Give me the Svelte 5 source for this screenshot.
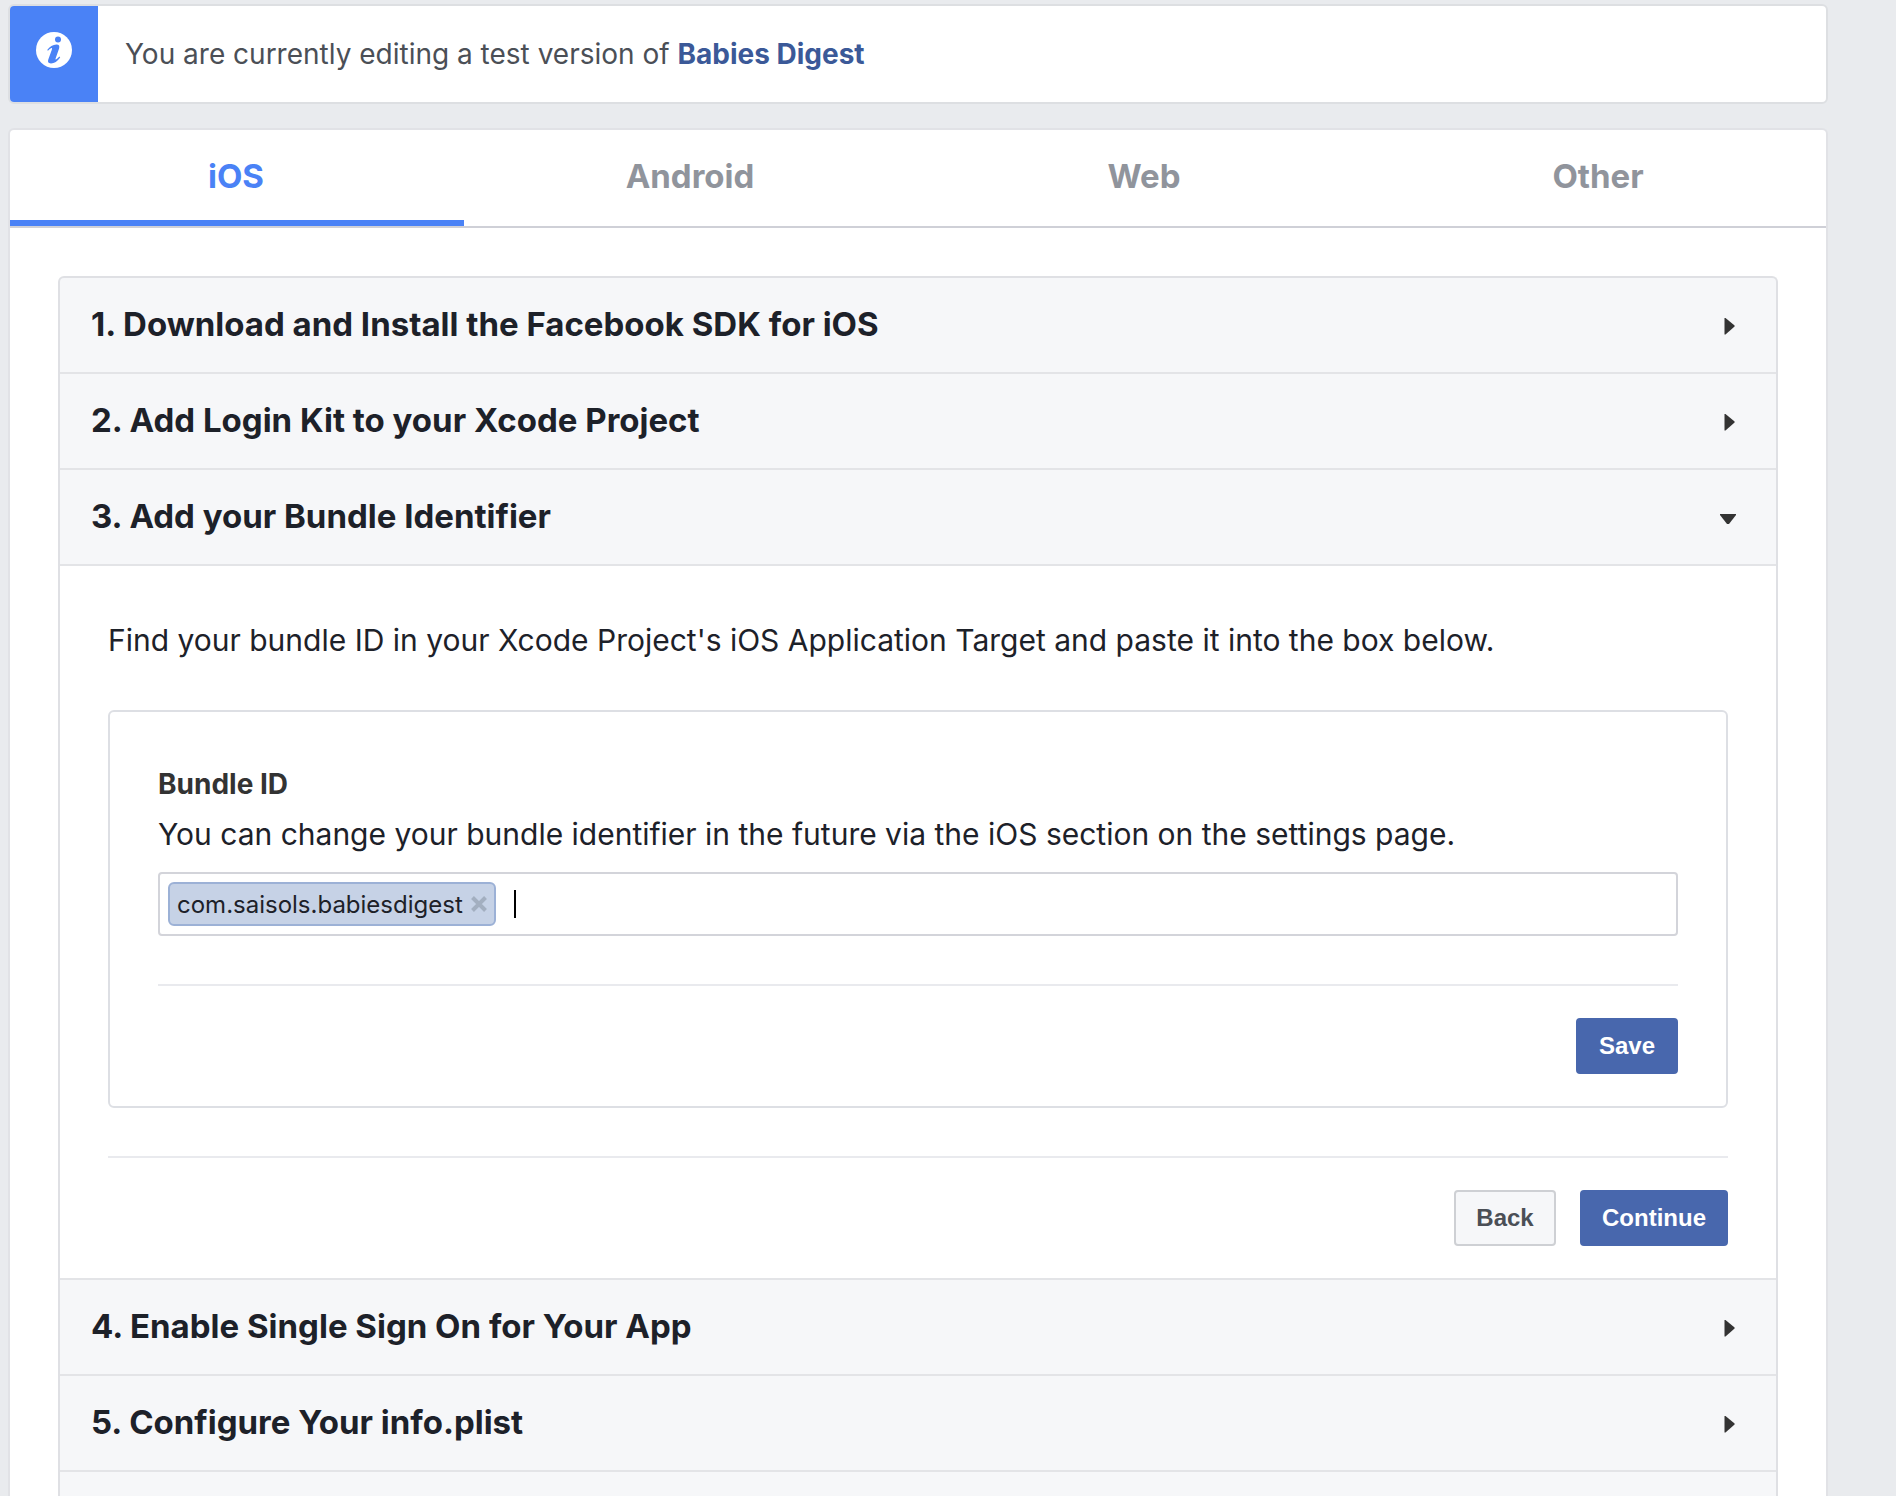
<script lang="ts">
  const tabs = ['iOS', 'Android', 'Web', 'Other'];
  const steps = [
    'Download and Install the Facebook SDK for iOS',
    'Add Login Kit to your Xcode Project',
    'Add your Bundle Identifier',
    'Enable Single Sign On for Your App',
    'Configure Your info.plist'
  ];

  let activeTab = $state('iOS');
  let openStep = $state(2);
  let bundleIds = $state(['com.saisols.babiesdigest']);

  function toggleStep(index: number) {
    openStep = openStep === index ? -1 : index;
  }

  function removeBundle(id: string) {
    bundleIds = bundleIds.filter((b) => b !== id);
  }
</script>

<div class="page">
  <div class="notice">
    <div class="notice-icon">
      <svg width="36" height="36" viewBox="0 0 36 36" aria-hidden="true">
        <circle cx="18" cy="18" r="18" fill="#fff" />
        <circle cx="22" cy="7.6" r="3" fill="#4a82f6" />
        <path
          d="M11.2 18C13.6 14.6 17 12.6 20.4 12.4C23 12.3 23.8 13.8 23.1 16.4L19.6 26.6C19.1 28.2 20.2 28 23.4 24.6L24.2 25.4C21.4 29.2 18.4 31.4 15 31.4C12.2 31.4 11.6 29.8 12.3 27.6L15.9 17.4C16.5 15.4 15 15.4 12 18.8Z"
          fill="#4a82f6"
        />
      </svg>
    </div>
    <p>You are currently editing a test version of <a href="#app">Babies Digest</a></p>
  </div>

  <main class="card">
    <div class="tabs" role="tablist">
      {#each tabs as tab}
        <button
          role="tab"
          aria-selected={activeTab === tab}
          class="tab"
          class:active={activeTab === tab}
          onclick={() => (activeTab = tab)}
        >{tab}</button>
      {/each}
    </div>

    <div class="steps">
      {#each steps as step, i}
        <button class="step" aria-expanded={openStep === i} onclick={() => toggleStep(i)}>
          <span>{i + 1}. {step}</span>
          <svg class="arrow" width="20" height="22" viewBox="0 0 20 22" aria-hidden="true">
            {#if openStep === i}
              <path d="M2 9H18V10L11 19H9L2 10Z" fill="#333" />
            {:else}
              <path d="M6.5 5H7.5L16.6 12.5V13.5L7.5 21.5H6.5Z" fill="#333" />
            {/if}
          </svg>
        </button>

        {#if i === 2 && openStep === 2}
          <div class="panel">
            <p class="text">
              Find your bundle ID in your Xcode Project's iOS Application Target and paste it into the box below.
            </p>

            <div class="box">
              <label for="bundle">Bundle ID</label>
              <p class="text">
                You can change your bundle identifier in the future via the iOS section on the settings page.
              </p>
              <div class="tokens">
                {#each bundleIds as id}
                  <span class="token">
                    {id}
                    <button aria-label="Remove" onclick={() => removeBundle(id)}>
                      <svg width="16" height="16" viewBox="0 0 16 16">
                        <path d="M1.5 1.5L14.5 14.5M14.5 1.5L1.5 14.5" stroke="#a3afc0" stroke-width="4" />
                      </svg>
                    </button>
                  </span>
                {/each}
                <span class="caret"></span>
                <input id="bundle" type="text" />
              </div>
              <div class="actions">
                <button class="btn primary">Save</button>
              </div>
            </div>

            <div class="actions">
              <button class="btn">Back</button>
              <button class="btn primary">Continue</button>
            </div>
          </div>
        {/if}
      {/each}
    </div>
  </main>
</div>

<style>
  :global(body) {
    background: #e9ebee;
  }

  .page {
    box-sizing: border-box;
    min-height: 100vh;
    padding: 4px 68px 0 8px;
    display: flex;
    flex-direction: column;
    gap: 24px;
    font-family: Inter, Roboto, sans-serif;
    color: #1d2129;
  }

  p {
    margin: 0;
  }

  button {
    font-family: inherit;
    cursor: pointer;
  }

  .notice {
    display: flex;
    background: #fff;
    border: 2px solid #dddfe2;
    border-radius: 6px;
    overflow: hidden;
  }

  .notice-icon {
    width: 88px;
    height: 96px;
    box-sizing: border-box;
    padding-top: 26px;
    text-align: center;
    background: #4a82f6;
  }

  .notice p {
    padding: 0 27px;
    font-size: 28px;
    line-height: 96px;
    color: #4b4f56;
  }

  .notice a {
    color: #3b5998;
    font-weight: 700;
    text-decoration: none;
  }

  .card {
    flex: 1;
    display: flex;
    flex-direction: column;
    background: #fff;
    border: 2px solid #e1e2e6;
    border-bottom: none;
    border-radius: 6px 6px 0 0;
  }

  .tabs {
    display: flex;
    border-bottom: 2px solid #cfd0d7;
  }

  .tab {
    flex: 1;
    height: 96px;
    padding: 2px 2px 0 0;
    background: none;
    border: none;
    border-bottom: 6px solid transparent;
    font-size: 33px;
    font-weight: 700;
    color: #90949c;
  }

  .tab.active {
    color: #4a82f6;
    border-bottom-color: #4a82f6;
  }

  .steps {
    flex: 1;
    margin: 48px 48px 0;
    background: #f6f7f9;
    border: 2px solid #dfe0e4;
    border-bottom: none;
    border-radius: 6px 6px 0 0;
  }

  .step {
    display: flex;
    align-items: center;
    justify-content: space-between;
    width: 100%;
    height: 96px;
    padding: 0 38px 2px 31px;
    background: none;
    border: none;
    border-bottom: 2px solid #e3e4e7;
    font-size: 33px;
    font-weight: 700;
    color: #1d2129;
    text-align: left;
  }

  .panel {
    padding: 48px 48px 32px;
    background: #fff;
    border-bottom: 2px solid #e3e4e7;
  }

  .text {
    font-size: 30px;
    line-height: 52px;
  }

  .box {
    margin: 44px 0 48px;
    padding: 48px 48px 32px;
    border: 2px solid #dddfe4;
    border-radius: 6px;
  }

  label {
    display: block;
    font-size: 28px;
    font-weight: 700;
    line-height: 48px;
    color: #333;
  }

  .tokens {
    display: flex;
    align-items: center;
    margin: 12px 0 48px;
    padding: 8px;
    border: 2px solid #d3d4da;
    border-radius: 4px;
  }

  .token {
    display: flex;
    align-items: center;
    gap: 8px;
    height: 40px;
    padding: 0 7px;
    background: #c6d2e6;
    border: 2px solid #9cb1d6;
    border-radius: 6px;
    font-size: 24px;
  }

  .token button {
    display: flex;
    padding: 0;
    background: none;
    border: none;
  }

  .caret {
    width: 2px;
    height: 28px;
    margin-left: 18px;
    background: #000;
  }

  .tokens input {
    flex: 1;
    min-width: 0;
    padding: 0;
    border: none;
    outline: none;
    background: none;
    font-family: inherit;
    font-size: 24px;
  }

  .actions {
    display: flex;
    justify-content: flex-end;
    gap: 24px;
    padding-top: 32px;
    border-top: 2px solid #e9eaee;
  }

  .btn {
    min-width: 102px;
    height: 56px;
    padding: 0 20px;
    background: #f6f7f9;
    border: 2px solid #ced0d4;
    border-radius: 4px;
    font-family: "Liberation Sans", Arial, sans-serif;
    font-size: 24px;
    font-weight: 700;
    color: #4b4f56;
  }

  .btn.primary {
    background: #4867ad;
    border-color: #4867ad;
    color: #fff;
  }
</style>
